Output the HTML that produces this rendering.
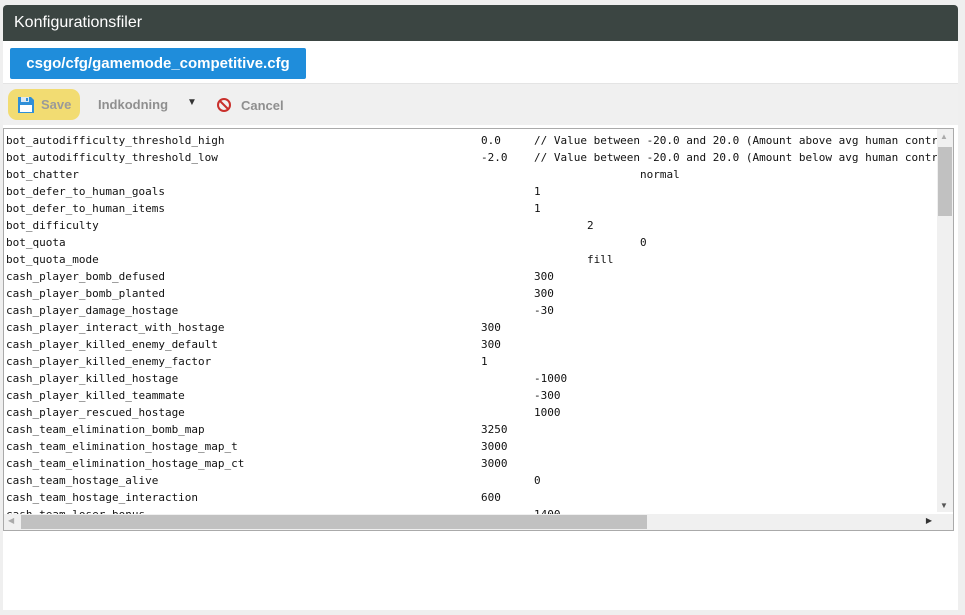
<!DOCTYPE html><html><head><style>
body{margin:0;background:#efefef;width:965px;height:615px;overflow:hidden;font-family:"Liberation Sans",Arial,sans-serif}
.panel{position:absolute;left:3px;top:5px;width:955px;height:605px;background:#fff;border-radius:4px 4px 0 0}
.hdr{position:absolute;left:0;top:0;width:955px;height:36px;background:#3b4542;color:#fff;font-size:16px;line-height:36px;padding-left:11px;box-sizing:border-box;border-radius:4px 4px 0 0}
.file{position:absolute;left:7px;top:43px;width:296px;height:31px;background:#1f8ddb;color:#fff;font-weight:bold;font-size:15px;line-height:31px;text-align:center;border-radius:2px}
.tb{position:absolute;left:0;top:78px;width:955px;height:41px;background:#f0f0f0;border-top:1px solid #e4e4e4}
.save{position:absolute;left:5px;top:5px;width:72px;height:31px;background:#f2dc72;border-radius:9px;color:#9a9a9a;font-weight:bold;font-size:13px;line-height:31px}
.tb .t{position:absolute;color:#8f8f8f;font-weight:bold;font-size:13px}
.ta{position:absolute;left:0;top:123px;width:949px;height:401px;border:1px solid #aaa;background:#fff;overflow:hidden}
.l{position:absolute;font-family:"DejaVu Sans Mono",monospace;font-size:11px;color:#111;white-space:pre;height:17px;line-height:17px}
.vs{position:absolute;right:0;top:17px;width:16px;height:366px;background:#f0f0f0}
.hs{position:absolute;left:0;bottom:0;width:932px;height:16px;background:#f0f0f0}
</style></head><body><div class="panel">
<div class="hdr">Konfigurationsfiler</div>
<div class="file">csgo/cfg/gamemode_competitive.cfg</div>
<div class="tb">
<div class="save"><svg style="position:absolute;left:9px;top:7px" width="18" height="18" viewBox="0 0 18 18"><path d="M1 1h13l3 3v13H1z" fill="#2f8fd8"/><rect x="4" y="1" width="8" height="5" fill="#dfe9f2"/><rect x="9" y="2" width="2" height="3" fill="#2f8fd8"/><rect x="3" y="9" width="12" height="7" fill="#fff"/></svg><span style="position:absolute;left:33px">Save</span></div>
<span class="t" style="left:95px;top:13px">Indkodning</span><span class="t" style="left:184px;top:13px;font-size:10px;color:#333">▼</span>
<svg style="position:absolute;left:213px;top:13px" width="16" height="16" viewBox="0 0 16 16"><circle cx="8" cy="8" r="6" fill="none" stroke="#c9302c" stroke-width="2"/><path d="M4 4l8 8" stroke="#c9302c" stroke-width="2"/></svg>
<span class="t" style="left:238px;top:14px">Cancel</span>
</div>
<div class="ta">
<div class="l" style="left:2px;top:3px">bot_autodifficulty_threshold_high</div><div class="l" style="left:477px;top:3px">0.0     // Value between -20.0 and 20.0 (Amount above avg human contr</div>
<div class="l" style="left:2px;top:20px">bot_autodifficulty_threshold_low</div><div class="l" style="left:477px;top:20px">-2.0    // Value between -20.0 and 20.0 (Amount below avg human contr</div>
<div class="l" style="left:2px;top:37px">bot_chatter</div><div class="l" style="left:636px;top:37px">normal</div>
<div class="l" style="left:2px;top:54px">bot_defer_to_human_goals</div><div class="l" style="left:530px;top:54px">1</div>
<div class="l" style="left:2px;top:71px">bot_defer_to_human_items</div><div class="l" style="left:530px;top:71px">1</div>
<div class="l" style="left:2px;top:88px">bot_difficulty</div><div class="l" style="left:583px;top:88px">2</div>
<div class="l" style="left:2px;top:105px">bot_quota</div><div class="l" style="left:636px;top:105px">0</div>
<div class="l" style="left:2px;top:122px">bot_quota_mode</div><div class="l" style="left:583px;top:122px">fill</div>
<div class="l" style="left:2px;top:139px">cash_player_bomb_defused</div><div class="l" style="left:530px;top:139px">300</div>
<div class="l" style="left:2px;top:156px">cash_player_bomb_planted</div><div class="l" style="left:530px;top:156px">300</div>
<div class="l" style="left:2px;top:173px">cash_player_damage_hostage</div><div class="l" style="left:530px;top:173px">-30</div>
<div class="l" style="left:2px;top:190px">cash_player_interact_with_hostage</div><div class="l" style="left:477px;top:190px">300</div>
<div class="l" style="left:2px;top:207px">cash_player_killed_enemy_default</div><div class="l" style="left:477px;top:207px">300</div>
<div class="l" style="left:2px;top:224px">cash_player_killed_enemy_factor</div><div class="l" style="left:477px;top:224px">1</div>
<div class="l" style="left:2px;top:241px">cash_player_killed_hostage</div><div class="l" style="left:530px;top:241px">-1000</div>
<div class="l" style="left:2px;top:258px">cash_player_killed_teammate</div><div class="l" style="left:530px;top:258px">-300</div>
<div class="l" style="left:2px;top:275px">cash_player_rescued_hostage</div><div class="l" style="left:530px;top:275px">1000</div>
<div class="l" style="left:2px;top:292px">cash_team_elimination_bomb_map</div><div class="l" style="left:477px;top:292px">3250</div>
<div class="l" style="left:2px;top:309px">cash_team_elimination_hostage_map_t</div><div class="l" style="left:477px;top:309px">3000</div>
<div class="l" style="left:2px;top:326px">cash_team_elimination_hostage_map_ct</div><div class="l" style="left:477px;top:326px">3000</div>
<div class="l" style="left:2px;top:343px">cash_team_hostage_alive</div><div class="l" style="left:530px;top:343px">0</div>
<div class="l" style="left:2px;top:360px">cash_team_hostage_interaction</div><div class="l" style="left:477px;top:360px">600</div>
<div class="l" style="left:2px;top:377px">cash_team_loser_bonus</div><div class="l" style="left:530px;top:377px">1400</div>
<div class="vs"><div style="position:absolute;left:1px;top:1px;width:14px;height:69px;background:#c1c1c1"></div><span style="position:absolute;left:3px;top:-14px;font-size:8px;color:#aaa">▲</span><span style="position:absolute;left:3px;bottom:2px;font-size:8px;color:#555">▼</span></div>
<div style="position:absolute;right:0;top:0;width:16px;height:17px;background:#f0f0f0"><span style="position:absolute;left:3px;top:3px;font-size:8px;color:#aaa">▲</span></div>
<div class="hs"><div style="position:absolute;left:17px;top:1px;width:626px;height:14px;background:#c1c1c1"></div><span style="position:absolute;left:4px;top:2px;font-size:8px;color:#aaa">◀</span><span style="position:absolute;right:4px;top:2px;font-size:8px;color:#333">▶</span></div>
<div style="position:absolute;right:0;bottom:0;width:17px;height:16px;background:#f0f0f0"></div>
</div>
</div></body></html>
